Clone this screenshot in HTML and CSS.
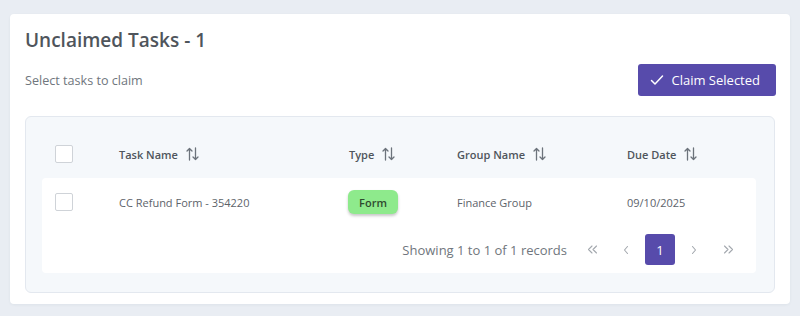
FILE: index.html
```html
<!DOCTYPE html>
<html lang="en">
<head>
    <meta charset="UTF-8">
    <title>Unclaimed Tasks</title>
    <link rel="stylesheet" href="styles.css">
</head>
<body>
    <div class="page">
        <div class="card">
            <h2 class="card-title">Unclaimed Tasks - 1</h2>
            <div class="toolbar">
                <span class="subtitle">Select tasks to claim</span>
                <button class="claim-btn">
                    <svg width="14" height="14" viewBox="0 0 14 14"><polyline points="1.5,7.5 5,11 12.5,3" fill="none" stroke="#fff" stroke-width="1.5" stroke-linecap="round" stroke-linejoin="round"/></svg>
                    Claim Selected
                </button>
            </div>

            <div class="table-wrap">
                <div class="row head">
                    <div class="cell"><span class="check"></span></div>
                    <div class="cell">Task Name <svg class="sort" width="13" height="14" viewBox="0 0 13 14"><path d="M3.5 13V1.5M1 4L3.5 1.5L6 4M9.5 1V12.5M7 10L9.5 12.5L12 10" fill="none" stroke="currentColor" stroke-width="1.3" stroke-linecap="round" stroke-linejoin="round"/></svg></div>
                    <div class="cell">Type <svg class="sort" width="13" height="14" viewBox="0 0 13 14"><path d="M3.5 13V1.5M1 4L3.5 1.5L6 4M9.5 1V12.5M7 10L9.5 12.5L12 10" fill="none" stroke="currentColor" stroke-width="1.3" stroke-linecap="round" stroke-linejoin="round"/></svg></div>
                    <div class="cell">Group Name <svg class="sort" width="13" height="14" viewBox="0 0 13 14"><path d="M3.5 13V1.5M1 4L3.5 1.5L6 4M9.5 1V12.5M7 10L9.5 12.5L12 10" fill="none" stroke="currentColor" stroke-width="1.3" stroke-linecap="round" stroke-linejoin="round"/></svg></div>
                    <div class="cell">Due Date <svg class="sort" width="13" height="14" viewBox="0 0 13 14"><path d="M3.5 13V1.5M1 4L3.5 1.5L6 4M9.5 1V12.5M7 10L9.5 12.5L12 10" fill="none" stroke="currentColor" stroke-width="1.3" stroke-linecap="round" stroke-linejoin="round"/></svg></div>
                </div>
                <div class="body">
                    <div class="row">
                        <div class="cell"><span class="check"></span></div>
                        <div class="cell">CC Refund Form - 354220</div>
                        <div class="cell"><span class="badge">Form</span></div>
                        <div class="cell">Finance Group</div>
                        <div class="cell">09/10/2025</div>
                    </div>
                    <div class="pager">
                        <span class="pager-info">Showing 1 to 1 of 1 records</span>
                        <span class="page-btn"><svg width="11" height="9" viewBox="0 0 11 9"><path d="M5 1L1.5 4.5L5 8M9.5 1L6 4.5L9.5 8" fill="none" stroke="currentColor" stroke-width="1.1" stroke-linecap="round" stroke-linejoin="round"/></svg></span>
                        <span class="page-btn"><svg width="6" height="10" viewBox="0 0 6 10"><path d="M4.5 1.5L1.5 5L4.5 8.5" fill="none" stroke="currentColor" stroke-width="1.1" stroke-linecap="round" stroke-linejoin="round"/></svg></span>
                        <span class="page-btn active">1</span>
                        <span class="page-btn"><svg width="6" height="10" viewBox="0 0 6 10"><path d="M1.5 1.5L4.5 5L1.5 8.5" fill="none" stroke="currentColor" stroke-width="1.1" stroke-linecap="round" stroke-linejoin="round"/></svg></span>
                        <span class="page-btn"><svg width="11" height="9" viewBox="0 0 11 9"><path d="M1.5 1L5 4.5L1.5 8M6 1L9.5 4.5L6 8" fill="none" stroke="currentColor" stroke-width="1.1" stroke-linecap="round" stroke-linejoin="round"/></svg></span>
                    </div>
                </div>
            </div>
        </div>
    </div>
</body>
</html>
```

FILE: styles.css
```css
:root {
    --page-bg: #e9edf3;
    --card-bg: #ffffff;
    --wrap-bg: #f5f8fb;
    --border-color: #e3e8ef;
    --title-color: #4f555c;
    --text-color: #5d636a;
    --muted: #70767d;
    --accent-color: #574bab;
}

body {
    margin: 0;
    background: var(--page-bg);
    font-family: 'Open Sans', 'Noto Sans', sans-serif;
    color: var(--text-color);
}

.page {
    padding: 14px 10px 12px;
}

.card {
    background: var(--card-bg);
    border-radius: 4px;
    box-shadow: 0 1px 3px rgba(40, 60, 90, 0.06);
    padding: 14px 15px 11px;
}

.card-title {
    margin: 0;
    font-size: 19px;
    line-height: 24px;
    font-weight: 600;
    color: var(--title-color);
}

.toolbar {
    display: flex;
    justify-content: space-between;
    align-items: center;
    margin-top: 12px;
}

.subtitle {
    font-size: 12.6px;
    color: var(--muted);
}

.claim-btn {
    display: flex;
    align-items: center;
    gap: 7px;
    height: 32px;
    padding: 0 16px 0 12px;
    background: var(--accent-color);
    color: #fff;
    border: none;
    border-radius: 3px;
    font-family: inherit;
    font-size: 13px;
    margin-right: -1px;
}

.table-wrap {
    margin-top: 20px;
    background: var(--wrap-bg);
    border: 1px solid var(--border-color);
    border-radius: 6px;
    padding: 13px 18px 19px 16px;
}

.row {
    display: grid;
    grid-template-columns: 77px 230px 108px 170px 1fr;
    align-items: center;
    height: 48px;
    font-size: 11px;
}

.row.head {
    font-weight: 600;
    color: var(--title-color);
}

.cell {
    display: flex;
    align-items: center;
}

.check {
    width: 16px;
    height: 16px;
    margin-left: 13px;
    border: 1px solid #cfd3d8;
    border-radius: 2px;
    background: #fff;
}

.sort {
    margin-left: 8px;
    color: #6c737b;
}

.body {
    background: #ffffff;
    border-radius: 4px;
}

.badge {
    display: inline-flex;
    align-items: center;
    justify-content: center;
    width: 50px;
    height: 24px;
    margin-left: -1px;
    background: #8eea8c;
    color: #2f4a2f;
    font-size: 11px;
    font-weight: 600;
    border-radius: 6px;
    box-shadow: 0 2px 3px rgba(0, 0, 0, 0.22);
}

.pager {
    display: flex;
    justify-content: flex-end;
    align-items: center;
    gap: 4px;
    height: 47px;
    padding-right: 13px;
}

.pager-info {
    font-size: 13px;
    color: var(--muted);
    margin-right: 6px;
}

.page-btn {
    width: 30px;
    height: 31px;
    display: flex;
    align-items: center;
    justify-content: center;
    font-size: 14px;
    color: #a3a8ae;
    border-radius: 3px;
}

.page-btn.active {
    background: var(--accent-color);
    color: #fff;
    font-size: 13px;
}
```
